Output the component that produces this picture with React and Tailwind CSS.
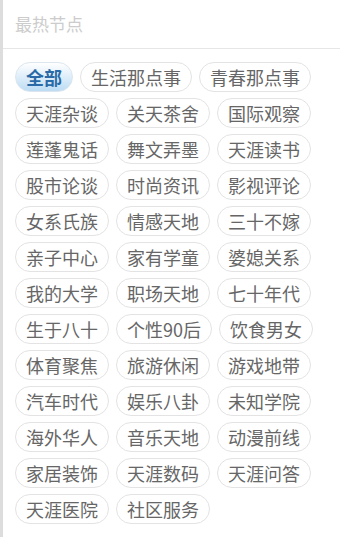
import React from "react";

const TAGS = [
  "生活那点事", "青春那点事",
  "天涯杂谈", "关天茶舍", "国际观察",
  "莲蓬鬼话", "舞文弄墨", "天涯读书",
  "股市论谈", "时尚资讯", "影视评论",
  "女系氏族", "情感天地", "三十不嫁",
  "亲子中心", "家有学童", "婆媳关系",
  "我的大学", "职场天地", "七十年代",
  "生于八十", "个性90后", "饮食男女",
  "体育聚焦", "旅游休闲", "游戏地带",
  "汽车时代", "娱乐八卦", "未知学院",
  "海外华人", "音乐天地", "动漫前线",
  "家居装饰", "天涯数码", "天涯问答",
  "天涯医院", "社区服务",
];

export default function App() {
  return (
    <div
      className="w-[340px] h-[537px] bg-white border-l-[3px] border-[#dddddd] overflow-hidden"
      style={{ fontFamily: '"Microsoft YaHei", "Noto Sans CJK SC", sans-serif' }}
    >
      {/* header */}
      <div className="h-[49px] flex items-center pl-[12px] border-b border-[#e6e6e6]">
        <span className="text-[17px] text-[#cccccc]">最热节点</span>
      </div>

      {/* tag cloud */}
      <div className="flex flex-wrap gap-x-[7px] gap-y-[6px] pl-[12px] pr-2 pt-[13px]">
        <span className="h-[30px] leading-[28px] px-[10px] rounded-full border border-[#dde6ee] bg-gradient-to-b from-white to-[#bcdcf4] text-[18px] font-bold text-[#2a6aa6]">
          全部
        </span>
        {TAGS.map((t) => (
          <span
            key={t}
            className="h-[30px] leading-[28px] px-[10px] rounded-full border border-[#e3e3e3] text-[18px] text-[#666666]"
          >
            {t}
          </span>
        ))}
      </div>
    </div>
  );
}
